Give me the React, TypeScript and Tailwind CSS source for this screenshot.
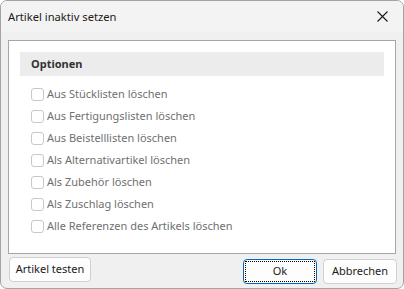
import React from "react";

const items = [
  "Aus Stücklisten löschen",
  "Aus Fertigungslisten löschen",
  "Aus Beistelllisten löschen",
  "Als Alternativartikel löschen",
  "Als Zubehör löschen",
  "Als Zuschlag löschen",
  "Alle Referenzen des Artikels löschen",
];

export default function App() {
  return (
    <div
      className="w-[404px] h-[289px] border border-[#a3a3a3] rounded-[7px] overflow-hidden bg-[#f0f0f0] flex flex-col text-[12px] text-[#1a1a1a]"
      style={{ fontFamily: '"Noto Sans", "Open Sans", sans-serif' }}
    >
      <div className="h-[31px] bg-[#f3f3f3] flex items-center justify-between pl-[7px] pr-[15px] shrink-0">
        <span className="text-[11.2px] leading-none">Artikel inaktiv setzen</span>
        <svg width="11" height="11" viewBox="0 0 11 11">
          <path d="M0.5 0.5 L10.5 10.5 M10.5 0.5 L0.5 10.5" stroke="#1a1a1a" strokeWidth="1.1" />
        </svg>
      </div>
      <div className="mt-[8px] ml-[7px] w-[388px] h-[214px] border border-[#a6a6a6] bg-white flex flex-col shrink-0">
        <div className="mt-[11px] ml-[11px] w-[364px] h-[24px] bg-[#ececec] flex items-center pl-[11px]">
          <span className="font-bold text-[11px] text-[#333]">Optionen</span>
        </div>
        <div className="mt-[7px] ml-[22px] flex flex-col">
          {items.map((t) => (
            <div key={t} className="h-[22px] flex items-center">
              <span className="w-[13px] h-[13px] rounded-[3px] border border-[#c8c8c8] bg-white shrink-0" />
              <span className="ml-[3px] text-[11px] text-[#707070]">{t}</span>
            </div>
          ))}
        </div>
      </div>
      <div className="flex items-start pl-[8px] pr-[6px] mt-[3px]">
        <button className="w-[82px] h-[25px] rounded-[4px] border border-[#d0d0d0] bg-[#fdfdfd] text-[11px] text-[#1a1a1a] flex items-center justify-center">
          Artikel testen
        </button>
        <div className="flex-1" />
        <button className="mt-[2px] w-[74px] h-[25px] rounded-[4px] border border-[#0067c0] bg-[#fdfdfd] p-[1px] flex">
          <span className="flex-1 border border-dotted border-black flex items-center justify-center text-[11px] text-[#1a1a1a]">
            Ok
          </span>
        </button>
        <button className="mt-[2px] ml-[6px] w-[74px] h-[25px] rounded-[4px] border border-[#d0d0d0] bg-[#fdfdfd] text-[11px] text-[#1a1a1a] flex items-center justify-center">
          Abbrechen
        </button>
      </div>
    </div>
  );
}
